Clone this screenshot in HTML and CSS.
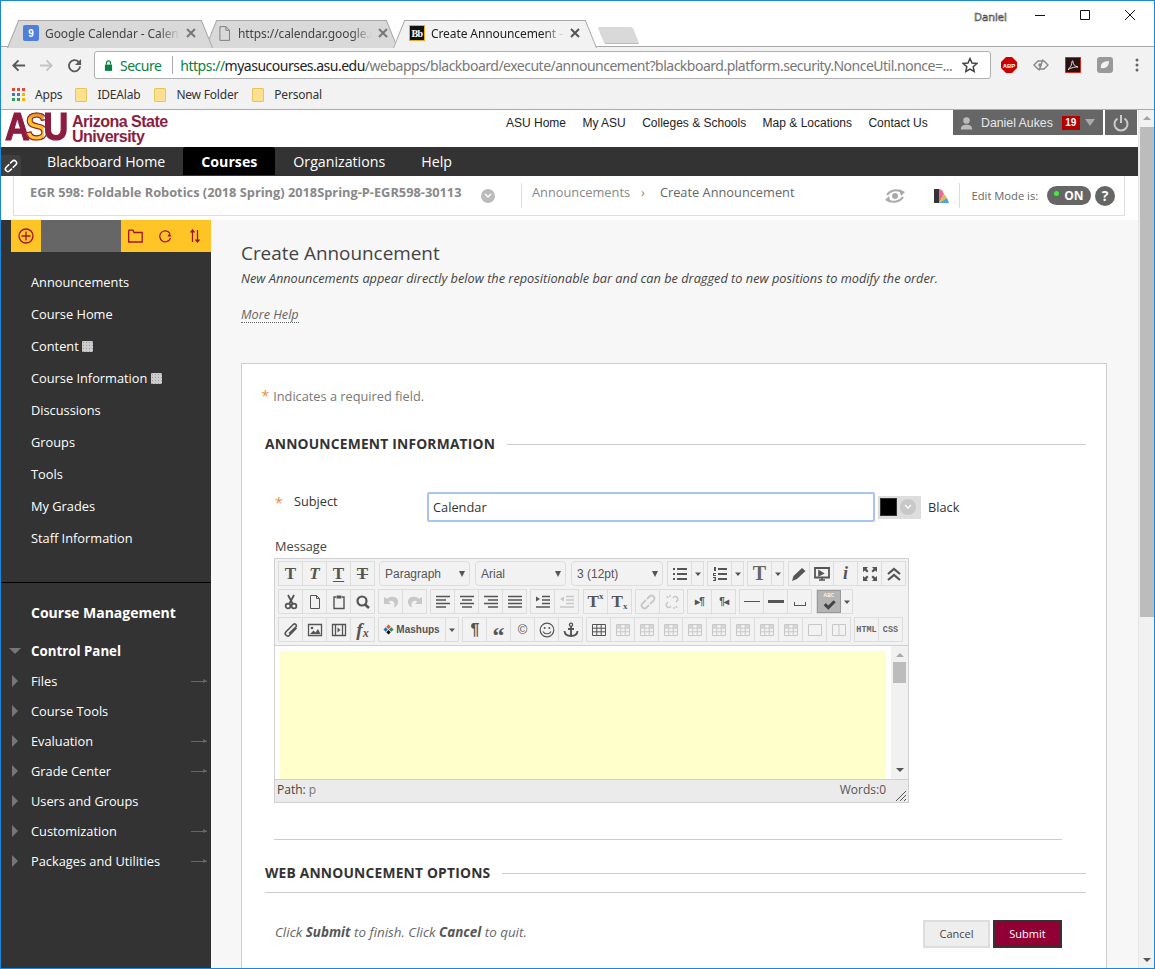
FILE: index.html
```html
<!DOCTYPE html>
<html lang="en">
<head>
    <meta charset="UTF-8">
    <meta name="viewport" content="width=device-width, initial-scale=1.0">
    <title>Create Announcement</title>
    <link rel="stylesheet" href="styles.css">
</head>
<body>
<svg class="defs" width="0" height="0">
    <symbol id="i-close" viewBox="0 0 10 10"><path d="M1 1l8 8M9 1l-8 8" stroke="currentColor" stroke-width="2" fill="none"/></symbol>
    <symbol id="i-cut" viewBox="0 0 16 16"><path d="M5 1l4.500 8.500M11 1L6.500 9.500" stroke="currentColor" stroke-width="1.800" fill="none"/><circle cx="5" cy="12" r="2.400" fill="none" stroke="currentColor" stroke-width="1.700"/><circle cx="11" cy="12" r="2.400" fill="none" stroke="currentColor" stroke-width="1.700"/></symbol>
    <symbol id="i-doc" viewBox="0 0 16 16"><path d="M3.500 1.500h6l3 3v10h-9zM9.500 1.500v3h3" fill="none" stroke="currentColor"/></symbol>
    <symbol id="i-paste" viewBox="0 0 16 16"><path d="M5 3H3v11.500h10V3h-2" fill="none" stroke="currentColor" stroke-width="1.400"/><path d="M5.500 1.500h5v3h-5z" fill="currentColor"/></symbol>
    <symbol id="i-find" viewBox="0 0 16 16"><circle cx="7" cy="7" r="4.500" fill="none" stroke="currentColor" stroke-width="2.200"/><path d="M10 10.500l4 3.500" stroke="currentColor" stroke-width="2.600"/></symbol>
    <symbol id="i-undo" viewBox="0 0 16 16"><path d="M1 3v7h7L5.500 7.500C8 5.800 11 7 11.500 10c.2 1.300-.2 2.500-1 3.500 3.500-1 5-3.800 4.500-7C14 3 9 1 4 4.800z" fill="currentColor"/></symbol>
    <symbol id="i-redo" viewBox="0 0 16 16"><path d="M15 3v7H8l2.500-2.500C8 5.800 5 7 4.500 10c-.2 1.300.2 2.500 1 3.500-3.500-1-5-3.800-4.500-7C2 3 7 1 12 4.800z" fill="currentColor"/></symbol>
    <symbol id="i-al" viewBox="0 0 16 16"><path d="M1 2.500h14M1 6h10M1 9.500h14M1 13h10" stroke="currentColor" stroke-width="1.600"/></symbol>
    <symbol id="i-ac" viewBox="0 0 16 16"><path d="M1 2.500h14M3 6h10M1 9.500h14M3 13h10" stroke="currentColor" stroke-width="1.600"/></symbol>
    <symbol id="i-ar" viewBox="0 0 16 16"><path d="M1 2.500h14M5 6h10M1 9.500h14M5 13h10" stroke="currentColor" stroke-width="1.600"/></symbol>
    <symbol id="i-aj" viewBox="0 0 16 16"><path d="M1 2.500h14M1 6h14M1 9.500h14M1 13h14" stroke="currentColor" stroke-width="1.600"/></symbol>
    <symbol id="i-ind" viewBox="0 0 16 16"><path d="M7 2.500h8M7 6h8M7 9.500h8M1 13h14" stroke="currentColor" stroke-width="1.600"/><path d="M1 2.500l4 2.500-4 2.500z" fill="currentColor"/></symbol>
    <symbol id="i-out" viewBox="0 0 16 16"><path d="M7 2.500h8M7 6h8M7 9.500h8M1 13h14" stroke="currentColor" stroke-width="1.600"/><path d="M5 2.500L1 5l4 2.500z" fill="currentColor"/></symbol>
    <symbol id="i-link" viewBox="0 0 16 16"><path d="M7 5l2.500-2.500a2.800 2.800 0 014 4L10 10M9 11l-2.500 2.500a2.800 2.800 0 01-4-4L6 6" fill="none" stroke="currentColor" stroke-width="1.800"/></symbol>
    <symbol id="i-unlink" viewBox="0 0 16 16"><path d="M9 4l1-1.200a2.600 2.600 0 013.500 3.500L12 8M7 12l-1 1.200a2.600 2.600 0 01-3.500-3.500L4 8M3 2l1 2M6 1v2M13 14l-1-2M10 15v-2" fill="none" stroke="currentColor" stroke-width="1.600"/></symbol>
    <symbol id="i-clip" viewBox="0 0 16 16"><path d="M13.500 6l-7 7.200a2.400 2.400 0 01-3.500-3.400l7.500-7.500a1.800 1.800 0 012.500 2.500L6 11.500" fill="none" stroke="currentColor" stroke-width="1.600"/></symbol>
    <symbol id="i-image" viewBox="0 0 16 16"><path d="M1.500 2.500h13v11h-13z" fill="none" stroke="currentColor" stroke-width="1.300"/><circle cx="5" cy="6" r="1.300" fill="currentColor"/><path d="M3 12l3.500-3.500 2 2 2.500-3.500 2.500 5z" fill="currentColor"/></symbol>
    <symbol id="i-media" viewBox="0 0 16 16"><path d="M1.500 2.500h13v11h-13zM4.500 2.500v11M11.500 2.500v11" fill="none" stroke="currentColor" stroke-width="1.300"/><path d="M6.500 5.500l3 2.500-3 2.500z" fill="currentColor"/></symbol>
    <symbol id="i-smile" viewBox="0 0 16 16"><circle cx="8" cy="8" r="6.800" fill="none" stroke="currentColor" stroke-width="1.200"/><circle cx="5.700" cy="6" r="1" fill="currentColor"/><circle cx="10.300" cy="6" r="1" fill="currentColor"/><path d="M4 9.500c1.500 3 6.500 3 8 0" fill="none" stroke="currentColor" stroke-width="1.200"/></symbol>
    <symbol id="i-anchor" viewBox="0 0 16 16"><circle cx="8" cy="2.800" r="1.600" fill="none" stroke="currentColor" stroke-width="1.300"/><path d="M8 4.500V14M5 7h6M1.500 9c.3 3.500 3.500 5 6.500 5s6.200-1.500 6.500-5" fill="none" stroke="currentColor" stroke-width="1.900"/></symbol>
    <symbol id="i-table" viewBox="0 0 16 16"><path d="M1.500 2.500h13v11h-13zM1.500 6.200h13M1.500 9.800h13M5.800 2.500v11M10.200 2.500v11" fill="none" stroke="currentColor"/></symbol>
    <symbol id="i-tfill" viewBox="0 0 16 16"><path d="M1.500 2.500h13v11h-13zM1.500 6.200h13M1.500 9.800h13M5.800 2.500v11M10.200 2.500v11" fill="none" stroke="currentColor"/><path d="M2 3h3.500v3H2zM10.500 3H14v3h-3.500z" fill="currentColor" opacity=".6"/></symbol>
    <symbol id="i-cell" viewBox="0 0 16 16"><path d="M1.500 2.500h13v11h-13z" fill="none" stroke="currentColor"/></symbol>
    <symbol id="i-split" viewBox="0 0 16 16"><path d="M1.500 2.500h13v11h-13zM8 2.500v11" fill="none" stroke="currentColor"/></symbol>
    <symbol id="i-full" viewBox="0 0 16 16"><path d="M1 1h5L4.500 2.800 6.500 5 5 6.500 2.800 4.500 1 6zM15 1v5l-1.800-1.500L11 6.500 9.500 5l2-2.200L10 1zM1 15v-5l1.800 1.500L5 9.500 6.500 11l-2 2.200L6 15zM15 15h-5l1.500-1.800-2-2.200L11 9.500l2.200 2L15 10z" fill="currentColor"/></symbol>
    <symbol id="i-chev2" viewBox="0 0 16 16"><path d="M2 8l6-5 6 5M2 14l6-5 6 5" fill="none" stroke="currentColor" stroke-width="2.200"/></symbol>
    <symbol id="i-pencil" viewBox="0 0 16 16"><path d="M1 15l1.500-5L11 2l3.500 3L6 13z" fill="currentColor"/></symbol>
    <symbol id="i-screen" viewBox="0 0 16 16"><path d="M1 2h14v9.500H1z" fill="none" stroke="currentColor" stroke-width="1.800"/><path d="M5 14h6M8 11v3M5 5l4 2.500-4 2z" stroke="currentColor" stroke-width="1.600" fill="currentColor"/></symbol>
    <symbol id="i-list" viewBox="0 0 16 16"><path d="M5 3h10M5 8h10M5 13h10" stroke="currentColor" stroke-width="1.800"/><path d="M1 2h2v2H1zM1 7h2v2H1zM1 12h2v2H1z" fill="currentColor"/></symbol>
    <symbol id="i-num" viewBox="0 0 16 16"><path d="M6 3h9M6 8h9M6 13h9" stroke="currentColor" stroke-width="1.800"/><path d="M2 1h2v4H2zM1 7h3v1H2v1h2v1H1zM1 11h3v4H1v-1h2v-.5H2v-1h1V12H1z" fill="currentColor"/></symbol>
    <symbol id="i-check" viewBox="0 0 18 18"><path d="M2 11l2.500-2.500 3 3L14 5l2.500 2.500L7.500 16.500z" fill="currentColor"/></symbol>
    <symbol id="i-dn" viewBox="0 0 8 8"><path d="M1 2.500h6L4 6z" fill="currentColor"/></symbol>
</svg>

<div class="window">
    <div class="titlebar">
        <div class="tabs">
            <div class="tab tab-one">
                <span class="favicon cal-fav">9</span>
                <span class="tab-title">Google Calendar - Calen</span>
                <svg class="tab-x"><use href="#i-close"/></svg>
            </div>
            <div class="tab tab-two">
                <svg class="doc-fav" viewBox="0 0 12 16"><path d="M1 .5h6.500l4 4v11H1zM7.500.5v4h4" fill="none" stroke="#777"/></svg>
                <span class="tab-title">https://calendar.google.c</span>
                <svg class="tab-x"><use href="#i-close"/></svg>
            </div>
            <div class="tab tab-three">
                <span class="favicon bb-fav">Bb</span>
                <span class="tab-title">Create Announcement –</span>
                <svg class="tab-x dark"><use href="#i-close"/></svg>
            </div>
            <div class="newtab"></div>
        </div>
        <div class="win-user">Daniel</div>
        <div class="win-btns">
            <svg width="12" height="12" viewBox="0 0 12 12"><path d="M1 6.500h10" stroke="#111"/></svg>
            <svg width="12" height="12" viewBox="0 0 12 12"><path d="M1.500 1.500h9v9h-9z" fill="none" stroke="#111"/></svg>
            <svg width="12" height="12" viewBox="0 0 12 12"><path d="M1 1l10 10M11 1L1 11" stroke="#111"/></svg>
        </div>
    </div>

    <div class="toolbar">
        <svg class="nav-ic" viewBox="0 0 16 16"><path d="M15 8H3M8 2.500L2.500 8 8 13.500" fill="none" stroke="#5a5a5a" stroke-width="2"/></svg>
        <svg class="nav-ic" viewBox="0 0 16 16"><path d="M1 8h12M8 2.500L13.500 8 8 13.500" fill="none" stroke="#c4c4c4" stroke-width="2"/></svg>
        <svg class="nav-ic" viewBox="0 0 16 16"><path d="M14 9a6 6 0 11-1.700-5" fill="none" stroke="#5a5a5a" stroke-width="2"/><path d="M15 1v6.500H8.500z" fill="#5a5a5a"/></svg>
        <div class="omnibox">
            <svg class="lock" viewBox="0 0 10 14"><path d="M1 6h8v7H1z" fill="#0b8043"/><path d="M2.800 6V4a2.200 2.200 0 014.400 0v2" fill="none" stroke="#0b8043" stroke-width="1.400"/></svg>
            <span class="secure">Secure</span>
            <span class="omni-sep"></span>
            <span class="url"><span class="scheme">https://</span><span class="domain">myasucourses.asu.edu</span>/webapps/blackboard/execute/announcement?blackboard.platform.security.NonceUtil.nonce=...</span>
            <svg class="star" viewBox="0 0 16 16"><path d="M8 1.500l2 4.500 4.800.5-3.600 3.200 1 4.800L8 12.100l-4.200 2.400 1-4.800L1.200 6.500 6 6z" fill="none" stroke="#444" stroke-width="1.500"/></svg>
        </div>
        <div class="ext-icons">
            <svg class="ext" viewBox="0 0 16 16"><path d="M5 0h6l5 5v6l-5 5H5l-5-5V5z" fill="#c00"/><text x="8" y="10.500" class="abp-text">ABP</text></svg>
            <svg class="ext" viewBox="0 0 16 16"><path d="M1 8l4-4h6l4 4-4 4H5z" fill="none" stroke="#888" stroke-width="1.400"/><path d="M10 2.500L6 13.500" stroke="#888" stroke-width="1.400"/><circle cx="7" cy="8" r="1.800" fill="#888"/></svg>
            <svg class="ext" viewBox="0 0 16 16"><path d="M.500.500h15v15H.500z" fill="#2a1210" stroke="#d0281c"/><path d="M3 12.500c2-1 4-5 4-8 0-1 1-1 1 0 0 3 2 5 5 5.500-3-.3-6 .5-10 2.500z" fill="none" stroke="#eee" stroke-width=".9"/></svg>
            <svg class="ext" viewBox="0 0 16 16"><rect width="16" height="16" rx="3" fill="#999"/><path d="M4 11c-1-4 2-7 8-7 0 5-3 8-8 7z" fill="#f2f2f2"/></svg>
            <svg class="ext menu-dots" viewBox="0 0 16 16"><circle cx="8" cy="3" r="1.500" fill="#666"/><circle cx="8" cy="8" r="1.500" fill="#666"/><circle cx="8" cy="13" r="1.500" fill="#666"/></svg>
        </div>
    </div>

    <div class="bookmarks">
        <span class="bm bm-apps"><span class="apps-grid"><i class="r"></i><i class="r"></i><i class="r"></i><i class="b"></i><i class="b"></i><i class="y"></i><i class="g"></i><i class="g"></i><i class="y"></i></span>Apps</span>
        <span class="bm bm-idea"><span class="folder"></span>IDEAlab</span>
        <span class="bm bm-new"><span class="folder"></span>New Folder</span>
        <span class="bm"><span class="folder"></span>Personal</span>
    </div>

    <div class="page">
        <div class="page-content">
            <header class="top-header">
                <div class="logo">
                    <span class="logo-mark">A<span class="logo-s">S</span>U</span>
                    <span class="logo-name">Arizona State<br>University</span>
                </div>
                <nav class="top-links">
                    <a>ASU Home</a><a>My ASU</a><a>Colleges &amp; Schools</a><a>Map &amp; Locations</a><a>Contact Us</a>
                </nav>
                <div class="user-box">
                    <svg class="user-ic" viewBox="0 0 16 16"><circle cx="8" cy="5" r="4" fill="#bbb"/><path d="M1 16c0-5 3-6 7-6s7 1 7 6z" fill="#bbb"/></svg>
                    <span class="user-name">Daniel Aukes</span>
                    <span class="badge">19</span>
                    <span class="user-caret"></span>
                </div>
                <div class="power-box">
                    <svg width="16" height="18" viewBox="0 0 16 18"><path d="M4.500 4.500a6.500 6.500 0 107 0M8 1v8" fill="none" stroke="#ccc" stroke-width="2"/></svg>
                </div>
            </header>

            <nav class="main-nav">
                <span class="quick-link"><svg width="14" height="14" viewBox="0 0 16 16"><use href="#i-link" color="#fff"/></svg></span>
                <a class="nav-first">Blackboard Home</a>
                <a class="active">Courses</a>
                <a>Organizations</a>
                <a>Help</a>
            </nav>

            <div class="crumb-wrap">
                <div class="crumbs">
                    <span class="course-title">EGR 598: Foldable Robotics (2018 Spring) 2018Spring-P-EGR598-30113</span>
                    <span class="circle-chev"><svg width="8" height="6" viewBox="0 0 8 6"><path d="M1 1l3 3 3-3" fill="none" stroke="#fff" stroke-width="1.400"/></svg></span>
                    <span class="crumb-sep"></span>
                    <span class="crumb-link">Announcements</span>
                    <span class="crumb-arrow">›</span>
                    <span class="crumb-here">Create Announcement</span>
                    <svg class="student-ic" viewBox="0 0 24 18"><circle cx="12" cy="9" r="3" fill="#aaa"/><path d="M4 8C7 3 14 2 19 5M20 10c-3 5-10 6-15 3" fill="none" stroke="#aaa" stroke-width="2"/><path d="M16 2l6 3-4 4zM8 16l-6-3 4-4z" fill="#aaa"/></svg>
                    <svg class="palette-ic" viewBox="0 0 15 15"><path d="M0 1h5v14H0z" fill="#333"/><path d="M5 1l3 1 2 4-5 9z" fill="#e86b9a"/><path d="M5 15l5-9 3 4z" fill="#e8b83c"/><path d="M5 15l8-5 2 5z" fill="#4ea3d8"/></svg>
                    <span class="crumb-sep edit-sep"></span>
                    <span class="edit-label">Edit Mode is:</span>
                    <span class="edit-toggle"><i></i>ON</span>
                    <span class="help-btn">?</span>
                </div>
            </div>

            <div class="body-row">
                <aside class="sidebar">
                    <div class="side-tools">
                        <span class="tool-y tool-add"><svg width="16" height="16" viewBox="0 0 16 16"><circle cx="8" cy="8" r="7" fill="none" stroke="#a3132f" stroke-width="1.300"/><path d="M8 3.500v9M3.500 8h9" stroke="#a3132f" stroke-width="1.300"/></svg></span>
                        <span class="tool-gap"></span>
                        <span class="tool-y tool-rest">
                            <svg width="15" height="14" viewBox="0 0 15 14"><path d="M.7 2V13h13.500V3.500H6L5 1.200H1z" fill="none" stroke="#a3132f" stroke-width="1.300"/></svg>
                            <svg width="14" height="14" viewBox="0 0 14 14"><path d="M12 4.500A5.500 5.500 0 1012.500 9" fill="none" stroke="#a3132f" stroke-width="1.300"/><path d="M13.500 7.500l-4 0L11.500 4z" fill="#a3132f"/></svg>
                            <svg width="10" height="14" viewBox="0 0 10 14"><path d="M2.500 13V1M.5 3.500l2-2.500 2 2.500M7.500 1v12M5.500 10.500l2 2.500 2-2.500" fill="none" stroke="#a3132f" stroke-width="1.300"/></svg>
                        </span>
                    </div>
                    <ul class="course-menu">
                        <li>Announcements</li>
                        <li>Course Home</li>
                        <li>Content <span class="dots-ic"></span></li>
                        <li>Course Information <span class="dots-ic"></span></li>
                        <li>Discussions</li>
                        <li>Groups</li>
                        <li>Tools</li>
                        <li>My Grades</li>
                        <li>Staff Information</li>
                    </ul>
                    <div class="side-rule"></div>
                    <h3 class="cm-title">Course Management</h3>
                    <div class="cp-row cp-open"><span class="tri-down"></span>Control Panel</div>
                    <div class="cp-row"><span class="tri"></span>Files<span class="side-arrow"></span></div>
                    <div class="cp-row"><span class="tri"></span>Course Tools</div>
                    <div class="cp-row"><span class="tri"></span>Evaluation<span class="side-arrow"></span></div>
                    <div class="cp-row"><span class="tri"></span>Grade Center<span class="side-arrow"></span></div>
                    <div class="cp-row"><span class="tri"></span>Users and Groups</div>
                    <div class="cp-row"><span class="tri"></span>Customization<span class="side-arrow"></span></div>
                    <div class="cp-row"><span class="tri"></span>Packages and Utilities<span class="side-arrow"></span></div>
                </aside>

                <main class="main">
                    <h1 class="page-title">Create Announcement</h1>
                    <p class="page-desc">New Announcements appear directly below the repositionable bar and can be dragged to new positions to modify the order.</p>
                    <a class="more-help">More Help</a>

                    <form class="card">
                        <p class="required"><span class="star">*</span>Indicates a required field.</p>
                        <h2 class="section"><span>ANNOUNCEMENT INFORMATION</span></h2>

                        <div class="subject-row">
                            <span class="star subject-star">*</span>
                            <label class="subject-label">Subject</label>
                            <input class="subject-input" type="text" value="Calendar">
                            <span class="color-pick"><i class="swatch"></i><i class="pick-chev"><svg width="8" height="6" viewBox="0 0 8 6"><path d="M1 1l3 3 3-3" fill="none" stroke="#fff" stroke-width="1.400"/></svg></i></span>
                            <span class="color-name">Black</span>
                        </div>

                        <label class="msg-label">Message</label>
                        <div class="editor">
                            <div class="ed-tools">
                                <div class="ed-row">
                                    <div class="grp"><b class="btn t">T</b><b class="btn t it">T</b><b class="btn t un">T</b><b class="btn t st">T</b></div>
                                    <div class="sel w91 ml1">Paragraph</div>
                                    <div class="sel w91 ml2">Arial</div>
                                    <div class="sel w92 ml2">3 (12pt)</div>
                                    <div class="grp ml1"><b class="btn"><svg><use href="#i-list"/></svg></b><b class="btn arr"><svg><use href="#i-dn"/></svg></b></div>
                                    <div class="grp"><b class="btn"><svg><use href="#i-num"/></svg></b><b class="btn arr"><svg><use href="#i-dn"/></svg></b></div>
                                    <div class="grp"><b class="btn t big">T</b><b class="btn arr"><svg><use href="#i-dn"/></svg></b></div>
                                    <div class="grp ml1"><b class="btn short"><svg><use href="#i-pencil"/></svg></b><b class="btn"><svg><use href="#i-screen"/></svg></b><b class="btn t it info">i</b><b class="btn"><svg><use href="#i-full"/></svg></b><b class="btn"><svg><use href="#i-chev2"/></svg></b></div>
                                </div>
                                <div class="ed-row">
                                    <div class="grp"><b class="btn"><svg><use href="#i-cut"/></svg></b><b class="btn"><svg><use href="#i-doc"/></svg></b><b class="btn"><svg><use href="#i-paste"/></svg></b><b class="btn"><svg><use href="#i-find"/></svg></b></div>
                                    <div class="grp off"><b class="btn"><svg><use href="#i-undo"/></svg></b><b class="btn"><svg><use href="#i-redo"/></svg></b></div>
                                    <div class="grp"><b class="btn"><svg><use href="#i-al"/></svg></b><b class="btn"><svg><use href="#i-ac"/></svg></b><b class="btn"><svg><use href="#i-ar"/></svg></b><b class="btn"><svg><use href="#i-aj"/></svg></b></div>
                                    <div class="grp"><b class="btn"><svg><use href="#i-ind"/></svg></b><b class="btn off"><svg><use href="#i-out"/></svg></b></div>
                                    <div class="grp ml1"><b class="btn t">T<sup>x</sup></b><b class="btn t">T<sub>x</sub></b></div>
                                    <div class="grp off"><b class="btn"><svg><use href="#i-link"/></svg></b><b class="btn"><svg><use href="#i-unlink"/></svg></b></div>
                                    <div class="grp"><b class="btn para">▸¶</b><b class="btn para">¶◂</b></div>
                                    <div class="grp"><b class="btn"><span class="hr-thin"></span></b><b class="btn"><span class="hr-thick"></span></b><b class="btn"><span class="nbsp-ic"></span></b></div>
                                    <div class="grp ml1"><b class="btn spell"><span>ABC</span><svg viewBox="0 0 18 18"><use href="#i-check"/></svg></b><b class="btn arr"><svg><use href="#i-dn"/></svg></b></div>
                                </div>
                                <div class="ed-row">
                                    <div class="grp"><b class="btn"><svg><use href="#i-clip"/></svg></b><b class="btn"><svg><use href="#i-image"/></svg></b><b class="btn"><svg><use href="#i-media"/></svg></b><b class="btn t it fx">f<sub>x</sub></b></div>
                                    <div class="grp"><b class="btn mash"><span class="mash-ic"><i></i><i></i><i></i><i></i></span>Mashups</b><b class="btn arr wide"><svg><use href="#i-dn"/></svg></b></div>
                                    <div class="grp"><b class="btn para big-para">¶</b><b class="btn quote">“</b><b class="btn copy">©</b><b class="btn"><svg><use href="#i-smile"/></svg></b><b class="btn"><svg><use href="#i-anchor"/></svg></b></div>
                                    <div class="grp"><b class="btn"><svg><use href="#i-table"/></svg></b><b class="btn off"><svg><use href="#i-tfill"/></svg></b><b class="btn off"><svg><use href="#i-tfill"/></svg></b><b class="btn off"><svg><use href="#i-tfill"/></svg></b><b class="btn off"><svg><use href="#i-tfill"/></svg></b><b class="btn off"><svg><use href="#i-tfill"/></svg></b><b class="btn off"><svg><use href="#i-tfill"/></svg></b><b class="btn off"><svg><use href="#i-tfill"/></svg></b><b class="btn off"><svg><use href="#i-tfill"/></svg></b><b class="btn off"><svg><use href="#i-cell"/></svg></b><b class="btn off"><svg><use href="#i-split"/></svg></b></div>
                                    <div class="grp"><b class="btn code">HTML</b><b class="btn code">CSS</b></div>
                                </div>
                            </div>
                            <div class="ed-area">
                                <div class="ed-paper"></div>
                                <div class="ed-scroll"><span class="ed-up"></span><span class="ed-thumb"></span><span class="ed-down"></span></div>
                            </div>
                            <div class="ed-status">
                                <span class="path"><span>Path:</span> p</span>
                                <span class="words">Words:0</span>
                                <svg class="grip" width="12" height="12" viewBox="0 0 12 12"><path d="M1 11L11 1M5 11l6-6M9 11l2-2" stroke="#555"/></svg>
                            </div>
                        </div>

                        <div class="divider"></div>
                        <h2 class="section section-two"><span>WEB ANNOUNCEMENT OPTIONS</span></h2>
                        <div class="section-rule"></div>

                        <div class="submit-row">
                            <p class="submit-note">Click <b>Submit</b> to finish. Click <b>Cancel</b> to quit.</p>
                            <button type="button" class="btn-cancel">Cancel</button>
                            <button type="button" class="btn-submit">Submit</button>
                        </div>
                    </form>
                </main>
            </div>
        </div>

        <div class="scrollbar">
            <span class="sb-up"></span>
            <span class="sb-thumb"></span>
            <span class="sb-down"></span>
        </div>
    </div>
</div>
</body>
</html>
```

FILE: styles.css
```css
/* page frame */
* {
    box-sizing: border-box;
}

html, body {
    margin: 0;
    padding: 0;
    height: 969px;
    overflow: hidden;
    background-color: #fff;
}

.defs {
    display: block;
    height: 0;
}

.window {
    width: 1155px;
    height: 969px;
    border: 1px solid #1a87d9;
    overflow: hidden;
    display: flex;
    flex-direction: column;
    font-family: "Open Sans", Arial, sans-serif;
}

/* browser title bar */
.titlebar {
    height: 46px;
    flex: none;
    display: flex;
    align-items: flex-start;
    background-color: #fff;
    border-bottom: 1px solid #a8a8a8;
    position: relative;
}

.tabs {
    display: flex;
    align-items: flex-end;
    height: 46px;
    padding-left: 6px;
    width: 966px;
    flex: none;
}

.tab {
    height: 28px;
    display: flex;
    align-items: center;
    position: relative;
    isolation: isolate;
    font-family: "Noto Sans", sans-serif;
    font-size: 12px;
    letter-spacing: -0.1px;
    color: #444;
    margin-bottom: -1px;
}

.tab::before,
.tab::after {
    content: "";
    position: absolute;
    top: 0;
    bottom: 0;
    width: 60%;
    background-color: #d9d9d9;
    border-top: 1px solid #a8a8a8;
    z-index: -1;
}

.tab::before {
    left: 0;
    border-left: 1px solid #a8a8a8;
    transform: skewX(-22deg);
    transform-origin: bottom left;
}

.tab::after {
    right: 0;
    border-right: 1px solid #a8a8a8;
    transform: skewX(22deg);
    transform-origin: bottom right;
}

.tab-one {
    width: 206px;
    padding: 0 17px 2px 16px;
    z-index: 2;
}

.tab-two {
    width: 193px;
    padding: 0 10px 2px 14px;
    margin-left: -8px;
    z-index: 1;
}

.tab-three {
    width: 204px;
    padding: 0 17px 2px 16px;
    margin-left: -5px;
    z-index: 3;
    color: #222;
}

.tab-three::before,
.tab-three::after {
    background-color: #f2f2f2;
}

.tab-title {
    flex: 1;
    min-width: 0;
    white-space: nowrap;
    -webkit-mask-image: linear-gradient(to right, #000 85%, transparent);
    mask-image: linear-gradient(to right, #000 85%, transparent);
}

.favicon {
    width: 16px;
    height: 16px;
    flex: none;
    margin-right: 6px;
    display: flex;
    align-items: center;
    justify-content: center;
    font-family: "Liberation Sans", sans-serif;
    font-weight: bold;
    font-size: 10px;
    color: #fff;
}

.cal-fav {
    background-color: #4f7fd9;
    border-radius: 2px;
}

.bb-fav {
    background-color: #111;
    border: 1px solid #e5ad2e;
    font-family: "Liberation Serif", serif;
    letter-spacing: -0.5px;
}

.doc-fav {
    width: 11px;
    height: 15px;
    flex: none;
    margin-right: 8px;
}

.tab-x {
    width: 10px;
    height: 10px;
    flex: none;
    margin-left: 6px;
    color: #777;
}

.tab-x.dark {
    color: #555;
}

.newtab {
    width: 35px;
    height: 17px;
    margin: 0 0 3px 4px;
    background-color: #d9d9d9;
    border-bottom: 1px solid #bbb;
    transform: skewX(22deg);
    border-radius: 2px;
}

.win-user {
    position: absolute;
    left: 973px;
    top: 8px;
    font-family: "Noto Sans", sans-serif;
    font-size: 11px;
    line-height: 15px;
    color: #fff;
    -webkit-text-stroke: 0.6px #444;
}

.win-btns {
    position: absolute;
    left: 1033px;
    top: 8px;
    display: flex;
    gap: 33px;
}

/* browser toolbar */
.toolbar {
    height: 33px;
    flex: none;
    display: flex;
    align-items: center;
    background-color: #f2f2f2;
    padding: 4px 0 1px 10px;
}

.nav-ic {
    width: 15px;
    height: 15px;
    margin-right: 13px;
    flex: none;
}

.omnibox {
    width: 897px;
    height: 28px;
    margin-left: -1px;
    flex: none;
    display: flex;
    align-items: center;
    background-color: #fff;
    border: 1px solid #b0b0b0;
    border-radius: 3px;
    padding: 0 6px 0 9px;
    font-family: "Noto Sans", sans-serif;
    font-size: 14px;
}

.lock {
    width: 9px;
    height: 13px;
    flex: none;
}

.secure {
    color: #0b8043;
    margin-left: 7px;
    letter-spacing: -0.5px;
}

.omni-sep {
    width: 1px;
    height: 18px;
    background-color: #aaa;
    margin: 0 7px 0 11px;
}

.url {
    flex: 1;
    white-space: nowrap;
    color: #777;
    letter-spacing: -0.5px;
}

.scheme {
    color: #0b8043;
}

.domain {
    color: #222;
}

.star {
    width: 16px;
    height: 16px;
    flex: none;
}

.ext-icons {
    display: flex;
    align-items: center;
    gap: 16px;
    margin-left: 10px;
}

.ext {
    width: 16px;
    height: 16px;
}

.abp-text {
    font-family: "Liberation Sans", sans-serif;
    font-size: 6px;
    font-weight: bold;
    fill: #fff;
    text-anchor: middle;
}

/* bookmarks */
.bookmarks {
    height: 30px;
    flex: none;
    display: flex;
    align-items: center;
    padding-left: 11px;
    background-color: #f2f2f2;
    border-bottom: 1px solid #aaa;
    font-family: "Noto Sans", sans-serif;
    font-size: 12px;
    color: #333;
    letter-spacing: -0.2px;
}

.bm {
    display: flex;
    align-items: center;
}

.bm-apps {
    margin-right: 13px;
}

.bm-idea {
    margin-right: 14px;
}

.bm-new {
    margin-right: 14px;
}

.apps-grid {
    width: 13px;
    height: 13px;
    display: grid;
    grid-template-columns: repeat(3, 3px);
    grid-auto-rows: 3px;
    gap: 2px;
    margin-right: 10px;
}

.apps-grid .r { background-color: #e04b37; }
.apps-grid .b { background-color: #3c78d8; }
.apps-grid .y { background-color: #f4b400; }
.apps-grid .g { background-color: #2f9e55; }

.folder {
    width: 12px;
    height: 14px;
    background-color: #fbe08f;
    border: 1px solid #e6c65c;
    border-radius: 1px;
    margin-right: 10px;
}

/* blackboard page */
.page {
    flex: 1;
    min-height: 0;
    display: flex;
}

.page-content {
    width: 1137px;
    flex: none;
    display: flex;
    flex-direction: column;
    background-color: #fff;
}

.scrollbar {
    flex: 1;
    display: flex;
    flex-direction: column;
    align-items: center;
    background-color: #f1f1f1;
    border-left: 1px solid #e6e6e6;
}

.sb-up,
.sb-down {
    width: 0;
    height: 0;
    border-left: 4px solid transparent;
    border-right: 4px solid transparent;
}

.sb-up {
    border-bottom: 4px solid #a3a3a3;
    margin-top: 6px;
}

.sb-thumb {
    width: 14px;
    height: 490px;
    margin-top: 7px;
    background-color: #bcbcbc;
}

.sb-down {
    border-top: 4px solid #555;
    margin-top: auto;
    margin-bottom: 6px;
}

.top-header {
    height: 37px;
    flex: none;
    display: flex;
    align-items: flex-start;
    background-color: #fff;
}

.logo {
    width: 505px;
    height: 37px;
    flex: none;
    display: flex;
    color: #8c1d40;
    font-family: "Liberation Sans", Arial, sans-serif;
    font-weight: bold;
    padding-left: 4px;
}

.logo-mark {
    display: inline-block;
    font-size: 38px;
    line-height: 35px;
    letter-spacing: -5px;
    width: 67px;
    flex: none;
    white-space: nowrap;
    -webkit-text-stroke: 1.2px #8c1d40;
    transform: scaleX(0.9);
    transform-origin: left center;
}

.logo-s {
    background-image: radial-gradient(circle at 50% 55%, #ffc627 0 40%, #d9862a 65%, #8c1d40 85%);
    -webkit-background-clip: text;
    background-clip: text;
    color: transparent;
}

.logo-name {
    font-size: 16.100px;
    line-height: 15px;
    letter-spacing: -0.55px;
    padding-top: 4px;
}

.top-links {
    width: 447px;
    flex: none;
    display: flex;
    height: 25px;
    align-items: center;
    gap: 16.400px;
    font-family: "Liberation Sans", Arial, sans-serif;
    font-size: 12px;
    color: #222;
}

.user-box {
    width: 150px;
    height: 25px;
    flex: none;
    display: flex;
    align-items: center;
    background-color: #666;
    color: #e8e8e8;
    font-family: "Liberation Sans", Arial, sans-serif;
    font-size: 12.300px;
    padding-left: 7px;
}

.user-ic {
    width: 13px;
    height: 14px;
    flex: none;
    margin-right: 8px;
}

.user-name {
    white-space: nowrap;
}

.badge {
    width: 18px;
    height: 14px;
    background-color: #b30000;
    color: #fff;
    font-weight: bold;
    font-size: 10px;
    line-height: 14px;
    text-align: center;
    margin-left: 9px;
}

.user-caret {
    width: 0;
    height: 0;
    margin-left: 5px;
    border-left: 5px solid transparent;
    border-right: 5px solid transparent;
    border-top: 7px solid #aaa;
}

.power-box {
    width: 32px;
    height: 25px;
    margin-left: 2px;
    flex: none;
    display: flex;
    align-items: center;
    justify-content: center;
    background-color: #666;
}

.main-nav {
    height: 29px;
    flex: none;
    display: flex;
    align-items: stretch;
    background-color: #333;
    color: #fff;
    font-size: 14.200px;
    line-height: 29px;
}

.quick-link {
    width: 20px;
    height: 21px;
    margin-top: 8px;
    background-color: #3f3f3f;
    border-top-right-radius: 4px;
    display: flex;
    align-items: center;
    justify-content: center;
}

.main-nav a {
    padding: 0 18px;
}

.main-nav .nav-first {
    margin-left: 8px;
}

.main-nav .active {
    background-color: #000;
    font-weight: bold;
    border-radius: 3px 3px 0 0;
    margin-bottom: 1px;
}

.crumb-wrap {
    height: 44px;
    flex: none;
    padding-left: 12px;
    background-color: #fff;
}

.crumbs {
    width: 1112px;
    height: 40px;
    display: flex;
    align-items: center;
    border-left: 1px solid #ddd;
    border-right: 1px solid #ddd;
    border-bottom: 1px solid #ddd;
    padding-left: 16px;
    font-size: 12.800px;
    color: #888;
}

.course-title {
    font-size: 12.800px;
    font-weight: bold;
    white-space: nowrap;
    margin-top: -8px;
    width: 451px;
    flex: none;
}

.circle-chev {
    width: 14px;
    height: 14px;
    border-radius: 50%;
    background-color: #bbb;
    display: flex;
    align-items: center;
    justify-content: center;
    flex: none;
}

.crumb-sep {
    width: 1px;
    height: 25px;
    background-color: #ddd;
    margin: 0 10px 0 26px;
    flex: none;
}

.crumb-link {
    margin-top: -8px;
}

.crumb-arrow {
    margin: -8px 15px 0 11px;
}

.crumb-here {
    margin-top: -8px;
    color: #666;
}

.student-ic {
    width: 24px;
    height: 18px;
    margin-left: 88px;
    flex: none;
}

.palette-ic {
    width: 15px;
    height: 15px;
    margin-left: 27px;
    flex: none;
}

.edit-sep {
    margin: 0 12px 0 10px;
}

.edit-label {
    font-size: 11.200px;
    color: #666;
    margin-right: 9px;
    white-space: nowrap;
}

.edit-toggle {
    width: 44px;
    height: 19px;
    flex: none;
    position: relative;
    border-radius: 10px;
    background-color: #666;
    color: #fff;
    font-size: 12px;
    font-weight: bold;
    line-height: 19px;
    padding-left: 17px;
}

.edit-toggle i {
    position: absolute;
    left: 7px;
    top: 5px;
    width: 5px;
    height: 5px;
    border-radius: 50%;
    background-color: #3cf03c;
}

.help-btn {
    width: 20px;
    height: 20px;
    margin-left: 4px;
    flex: none;
    border-radius: 50%;
    background-color: #666;
    color: #fff;
    font-weight: bold;
    font-size: 14px;
    line-height: 20px;
    text-align: center;
}

.body-row {
    flex: 1;
    min-height: 0;
    display: flex;
}

/* course menu */
.sidebar {
    width: 210px;
    flex: none;
    background-color: #333;
    color: #fff;
    font-size: 12.800px;
}

.side-tools {
    height: 32px;
    margin-left: 10px;
    display: flex;
}

.tool-y {
    background-color: #ffc425;
    display: flex;
    align-items: center;
}

.tool-add {
    width: 30px;
    justify-content: center;
}

.tool-gap {
    width: 80px;
    background-color: #666;
}

.tool-rest {
    flex: 1;
    padding-left: 7px;
}

.tool-rest svg:nth-child(2) {
    margin: 0 18px 0 15px;
}

.course-menu {
    list-style: none;
    margin: 14px 0 28px;
    padding: 0 0 0 30px;
}

.course-menu li {
    height: 32px;
    line-height: 32px;
}

.dots-ic {
    display: inline-block;
    width: 11px;
    height: 11px;
    vertical-align: -1px;
    background-color: #ccc;
    border-radius: 1px;
    background-image: radial-gradient(circle, #999 0.8px, transparent 1px);
    background-size: 3px 3px;
}

.side-rule {
    height: 1px;
    background-color: #000;
}

.cm-title {
    margin: 20px 0 13px 30px;
    font-size: 14px;
    line-height: 20px;
    font-weight: bold;
}

.cp-row {
    height: 30px;
    line-height: 30px;
    padding-left: 11px;
    display: flex;
    align-items: center;
}

.cp-open {
    font-weight: bold;
    font-size: 13.300px;
}

.tri,
.tri-down {
    width: 0;
    height: 0;
    flex: none;
}

.tri {
    border-top: 6px solid transparent;
    border-bottom: 6px solid transparent;
    border-left: 6px solid #777;
    margin-right: 13px;
    margin-left: 0;
}

.tri-down {
    border-left: 6px solid transparent;
    border-right: 6px solid transparent;
    border-top: 6px solid #777;
    margin: 0 10px 0 -3px;
}

.side-arrow {
    width: 16px;
    height: 1px;
    margin-left: auto;
    margin-right: 4px;
    background-color: #666;
    position: relative;
}

.side-arrow::after {
    content: "";
    position: absolute;
    right: 0;
    top: -2px;
    width: 0;
    height: 0;
    border-top: 2.500px solid transparent;
    border-bottom: 2.500px solid transparent;
    border-left: 4px solid #666;
}

/* main content */
.main {
    flex: 1;
    min-width: 0;
    background-color: #f7f7f7;
    padding: 20px 30px 0;
    color: #555;
}

.page-title {
    margin: 0;
    font-size: 18.900px;
    line-height: 26px;
    font-weight: normal;
    color: #444;
}

.page-desc {
    margin: 2px 0 0;
    font-size: 12.750px;
    line-height: 20px;
    font-style: italic;
    color: #444;
    white-space: nowrap;
}

.more-help {
    display: inline-block;
    margin-top: 18px;
    font-size: 12.650px;
    line-height: 16px;
    font-style: italic;
    color: #666;
    border-bottom: 1px dotted #666;
}

.card {
    margin-top: 39px;
    width: 866px;
    height: 640px;
    background-color: #fff;
    border: 1px solid #ccc;
    padding: 22px 20px 0;
    font-size: 12.750px;
}

.required {
    margin: 0 0 0 -0.500px;
    line-height: 20px;
    color: #777;
}

.required .star {
    margin-right: 4px;
}

.star {
    color: #f08a3c;
    font-size: 14px;
    margin-right: 6px;
}

.section {
    margin: 28px 0 0 3px;
    display: flex;
    align-items: center;
    gap: 12px;
    font-size: 13.800px;
    line-height: 20px;
    font-weight: bold;
    color: #333;
    letter-spacing: 0.2px;
}

.section::after {
    content: "";
    flex: 1;
    height: 1px;
    background-color: #ccc;
}

.subject-row {
    margin-top: 38px;
    height: 30px;
    display: flex;
    align-items: center;
    color: #333;
}

.subject-star {
    margin: -12px 0 0 13px;
    width: 19px;
    flex: none;
}

.subject-label {
    width: 133px;
    flex: none;
    margin-top: -12px;
}

.subject-input {
    width: 448px;
    height: 30px;
    flex: none;
    border: 2px solid #a8c4f0;
    border-radius: 2px;
    padding: 0 4px;
    outline: none;
    color: #333;
    font-family: "Open Sans", Arial, sans-serif;
    font-size: 12.800px;
}

.color-pick {
    width: 43px;
    height: 23px;
    margin-left: 3px;
    flex: none;
    display: flex;
    align-items: center;
    padding-left: 2px;
    background-color: #ddd;
}

.swatch {
    width: 17px;
    height: 18px;
    background-color: #000;
    border: 1px solid #333;
}

.pick-chev {
    width: 16px;
    height: 16px;
    margin-left: 3px;
    border-radius: 50%;
    background-color: #c8c8c8;
    display: flex;
    align-items: center;
    justify-content: center;
}

.color-name {
    margin-left: 7px;
}

.msg-label {
    display: block;
    margin: 14px 0 2px 13px;
    line-height: 20px;
    color: #444;
}

/* text editor */
.editor {
    width: 635px;
    height: 245px;
    margin-left: 12px;
    border: 1px solid #d0d0d0;
    display: flex;
    flex-direction: column;
    background-color: #f2f2f2;
}

.ed-tools {
    height: 87px;
    flex: none;
    padding: 2px 0 0 3px;
    border-bottom: 1px solid #d0d0d0;
}

.ed-row {
    height: 25px;
    margin-bottom: 3px;
    display: flex;
    gap: 3px;
}

.grp {
    display: flex;
    height: 25px;
    border: 1px solid #ddd;
    border-right: 0;
    flex: none;
}

.ml1 {
    margin-left: 1px;
}

.ml2 {
    margin-left: 2px;
}

.btn {
    width: 24px;
    height: 23px;
    flex: none;
    display: flex;
    align-items: center;
    justify-content: center;
    border-right: 1px solid #ddd;
    color: #555;
    font-weight: normal;
}

.btn svg {
    width: 16px;
    height: 16px;
}

.btn.short {
    width: 21px;
}

.btn.arr {
    width: 12px;
}

.btn.arr svg {
    width: 8px;
    height: 8px;
}

.btn.arr.wide {
    width: 13px;
}

.off .btn,
.btn.off,
.grp.off {
    color: #c8c8c8;
}

.t {
    font-family: "Liberation Serif", serif;
    font-weight: bold;
    font-size: 17px;
}

.t sup,
.t sub {
    font-size: 9px;
    line-height: 1;
    vertical-align: baseline;
}

.t sup {
    align-self: flex-start;
    margin-top: 2px;
}

.t sub {
    align-self: flex-end;
    margin-bottom: 2px;
}

.it {
    font-style: italic;
}

.un {
    text-decoration: underline;
    text-underline-offset: 2px;
    text-decoration-thickness: 1px;
}

.st {
    text-decoration: line-through;
    text-decoration-thickness: 1px;
}

.big {
    font-size: 20px;
    color: #666;
}

.info {
    font-size: 18px;
}

.fx {
    font-size: 19px;
}

.fx sub {
    font-size: 12px;
}

.para {
    font-family: "Liberation Sans", sans-serif;
    font-size: 10px;
    font-weight: bold;
    letter-spacing: -1px;
}

.big-para {
    font-size: 16px;
}

.quote {
    font-family: "Liberation Serif", serif;
    font-weight: bold;
    font-size: 24px;
    line-height: 1;
    padding-top: 10px;
}

.copy {
    font-family: "Liberation Sans", sans-serif;
    font-size: 13px;
}

.hr-thin,
.hr-thick {
    display: block;
    width: 16px;
    background-color: #555;
}

.hr-thin {
    height: 1px;
}

.hr-thick {
    height: 3px;
}

.nbsp-ic {
    display: block;
    width: 12px;
    height: 4px;
    margin-top: 4px;
    border: 1px solid #555;
    border-top: 0;
}

.spell {
    position: relative;
    flex-direction: column;
    background-color: #b4b4b4;
    border: 1px solid #999;
    color: #fff;
    font-family: "Liberation Mono", monospace;
    font-size: 6px;
    line-height: 6px;
}

.spell svg {
    width: 17px;
    height: 15px;
    margin-top: -3px;
    color: #444;
}

.mash {
    width: 67px;
    font-family: "Liberation Sans", sans-serif;
    font-weight: bold;
    font-size: 10px;
    gap: 3px;
}

.mash-ic {
    width: 9px;
    height: 9px;
    display: grid;
    grid-template-columns: 4px 4px;
    gap: 1px;
    transform: rotate(45deg) scale(0.8);
}

.mash-ic i { background-color: #e8552d; }
.mash-ic i:nth-child(2) { background-color: #1f8a70; }
.mash-ic i:nth-child(3) { background-color: #2c6fbb; }
.mash-ic i:nth-child(4) { background-color: #111; }

.code {
    font-family: "Liberation Mono", monospace;
    font-size: 8.500px;
    font-weight: bold;
    color: #666;
}

.sel {
    height: 25px;
    flex: none;
    display: flex;
    align-items: center;
    border: 1px solid #ddd;
    border-radius: 4px;
    padding-left: 5px;
    font-family: "Liberation Sans", sans-serif;
    font-size: 12px;
    color: #555;
    position: relative;
}

.sel::after {
    content: "";
    margin-left: auto;
    margin-right: 4px;
    border-left: 3.500px solid transparent;
    border-right: 3.500px solid transparent;
    border-top: 6px solid #555;
}

.w91 {
    width: 91px;
}

.w92 {
    width: 92px;
}

.ed-area {
    height: 133px;
    flex: none;
    display: flex;
    background-color: #fff;
    padding: 5px 0 0 5px;
}

.ed-paper {
    width: 606px;
    background-color: #ffffcc;
}

.ed-scroll {
    width: 17px;
    margin: -5px 0 0 5px;
    display: flex;
    flex-direction: column;
    align-items: center;
    background-color: #f1f1f1;
}

.ed-up,
.ed-down {
    width: 0;
    height: 0;
    border-left: 4px solid transparent;
    border-right: 4px solid transparent;
}

.ed-up {
    margin-top: 7px;
    border-bottom: 4px solid #aaa;
}

.ed-thumb {
    width: 13px;
    height: 21px;
    margin-top: 5px;
    background-color: #bcbcbc;
}

.ed-down {
    margin-top: auto;
    margin-bottom: 7px;
    border-top: 4px solid #555;
}

.ed-status {
    flex: 1;
    display: flex;
    align-items: center;
    padding: 0 1px 3px 2px;
    background-color: #ebebeb;
    border-top: 1px solid #d0d0d0;
    font-size: 12px;
    color: #777;
}

.path span {
    color: #444;
}

.words {
    margin-left: auto;
    margin-right: 9px;
    color: #555;
}

.grip {
    flex: none;
    align-self: flex-end;
    margin-bottom: -3px;
}

.divider {
    width: 788px;
    height: 1px;
    margin: 36px 0 0 12px;
    background-color: #ccc;
}

.section-two {
    margin-top: 23px;
}

.section-rule {
    height: 1px;
    margin: 9px 0 0 3px;
    background-color: #ccc;
}

.submit-row {
    width: 800px;
    margin-top: 27px;
    display: flex;
    align-items: center;
}

.submit-note {
    margin: -4px auto 0 13px;
    font-size: 13.400px;
    font-style: italic;
    color: #666;
}

.submit-note b {
    color: #555;
}

.btn-cancel,
.btn-submit {
    height: 28px;
    font-family: "Open Sans", Arial, sans-serif;
    font-size: 11px;
    padding: 0 0 2px;
}

.btn-cancel {
    width: 67px;
    background-color: #eee;
    border: 2px solid #ddd;
    color: #444;
}

.btn-submit {
    width: 69px;
    margin-left: 3px;
    background-color: #900035;
    border: 2px solid #333;
    color: #fff;
}
```
